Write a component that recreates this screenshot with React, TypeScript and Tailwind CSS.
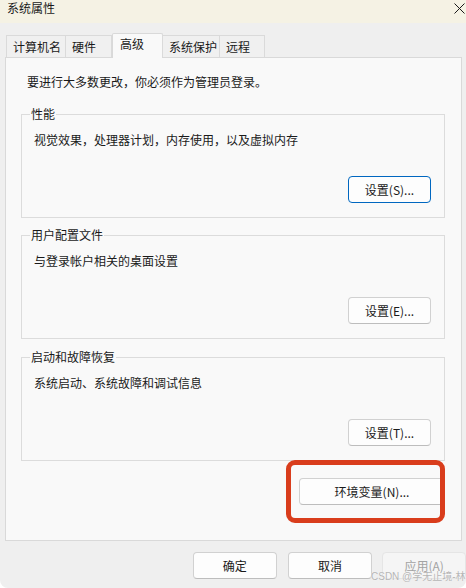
import React from "react";

const font = { fontFamily: '"Noto Sans CJK SC", "Noto Sans", sans-serif' };

function Btn({ label, focused, disabled, className = "" }: { label: string; focused?: boolean; disabled?: boolean; className?: string }) {
  const base = "flex items-center justify-center rounded-[4px] text-[12px] leading-[16px] border ";
  const style = disabled
    ? "bg-[#f5f5f5] border-[#e5e5e5] text-[#a3a3a3]"
    : focused
    ? "bg-[#fdfdfd] border-[#0067c0] text-[#1a1a1a]"
    : "bg-[#fdfdfd] border-[#d1d1d1] border-b-[#bdbdbd] text-[#1a1a1a]";
  return <div className={base + style + " " + className}>{label}</div>;
}

function Group({ title, text, btn, focused, className = "" }: { title: string; text: string; btn: string; focused?: boolean; className?: string }) {
  return (
    <div className={"relative ml-[15px] mr-[16px] h-[104px] border border-[#dcdcdc] flex flex-col pl-[12px] pr-[13px] pt-[17px] pb-[14px] " + className}>
      <div className="absolute left-[8px] top-[-9px] bg-[#f9f9f9] px-[1px] text-[12px] leading-[16px] text-[#1a1a1a]">{title}</div>
      <div className="text-[12px] leading-[16px] text-[#1a1a1a]">{text}</div>
      <div className="mt-auto flex justify-end">
        <Btn label={btn} focused={focused} className="w-[83px] h-[27px]" />
      </div>
    </div>
  );
}

const tabs = [
  { t: "计算机名", w: "w-[60px]" },
  { t: "硬件", w: "w-[47px]" },
  { t: "高级", w: "w-[51px]", sel: true },
  { t: "系统保护", w: "w-[58px]" },
  { t: "远程", w: "w-[46px]" },
];

export default function App() {
  return (
    <div className="w-[466px] h-[588px] bg-white relative overflow-hidden" style={font}>
      <div className="h-[588px] bg-[#efefef] rounded-b-[8px] flex flex-col">
        <div className="h-[23px] bg-[#f5f2e4] flex items-start justify-between pl-[7px] pr-[1px]">
          <div className="text-[12px] leading-[16px] text-[#1a1a1a] mt-[0px]">系统属性</div>
          <svg width="11" height="11" viewBox="0 0 11 11" className="mt-[3px]">
            <path d="M0.5 0.5 L10.5 10.5 M10.5 0.5 L0.5 10.5" stroke="#1a1a1a" strokeWidth="1" />
          </svg>
        </div>
        <div className="h-[10px]" />
        <div className="flex items-end pl-[6px] h-[24px] relative z-10">
          {tabs.map((tab) =>
            tab.sel ? (
              <div
                key={tab.t}
                className={tab.w + " h-[25px] mb-[-1px] bg-[#f9f9f9] border border-b-0 border-[#d9d9d9] rounded-t-[2px] pl-[7px] pt-[2px] text-[12px] leading-[16px] text-[#1a1a1a]"}
              >
                {tab.t}
              </div>
            ) : (
              <div
                key={tab.t}
                className={tab.w + " h-[22px] bg-[#f0f0f0] border border-b-0 border-[#dadada] pl-[6px] pt-[3px] text-[12px] leading-[16px] text-[#1a1a1a] -ml-[1px] first:ml-0"}
              >
                {tab.t}
              </div>
            )
          )}
        </div>
        <div className="ml-[5px] mr-[4px] h-[484px] bg-[#f9f9f9] border border-[#d9d9d9] flex flex-col">
          <div className="pl-[21px] pt-[16px] text-[12px] leading-[16px] text-[#1a1a1a]">要进行大多数更改，你必须作为管理员登录。</div>
          <Group className="mt-[24px]" title="性能" text="视觉效果，处理器计划，内存使用，以及虚拟内存" btn="设置(S)..." focused />
          <Group className="mt-[17px]" title="用户配置文件" text="与登录帐户相关的桌面设置" btn="设置(E)..." />
          <Group className="mt-[18px] h-[103px]" title="启动和故障恢复" text="系统启动、系统故障和调试信息" btn="设置(T)..." />
          <div className="mt-[17px] mr-[16px] flex justify-end">
            <Btn label="环境变量(N)..." className="w-[146px] h-[27px]" />
          </div>
        </div>
        <div className="flex pl-[193px] pt-[11px]">
          <Btn label="确定" className="w-[84px] h-[27px]" />
          <Btn label="取消" className="w-[85px] h-[27px] ml-[11px]" />
          <Btn label="应用(A)" disabled className="w-[84px] h-[27px] ml-[10px]" />
        </div>
      </div>
      <div className="absolute left-[286px] top-[460px] w-[159px] h-[63px] border-[5px] border-[#d93d1c] rounded-[9px]" />
      <div
        className="absolute left-[371px] top-[570px] whitespace-nowrap text-[10px] leading-[14px] text-[#b5b5b5]"
        style={{ fontFamily: '"Liberation Sans", "Noto Sans CJK SC", sans-serif', textShadow: "0 0 1px #fff" }}
      >
        CSDN @学无止境-林
      </div>
    </div>
  );
}
